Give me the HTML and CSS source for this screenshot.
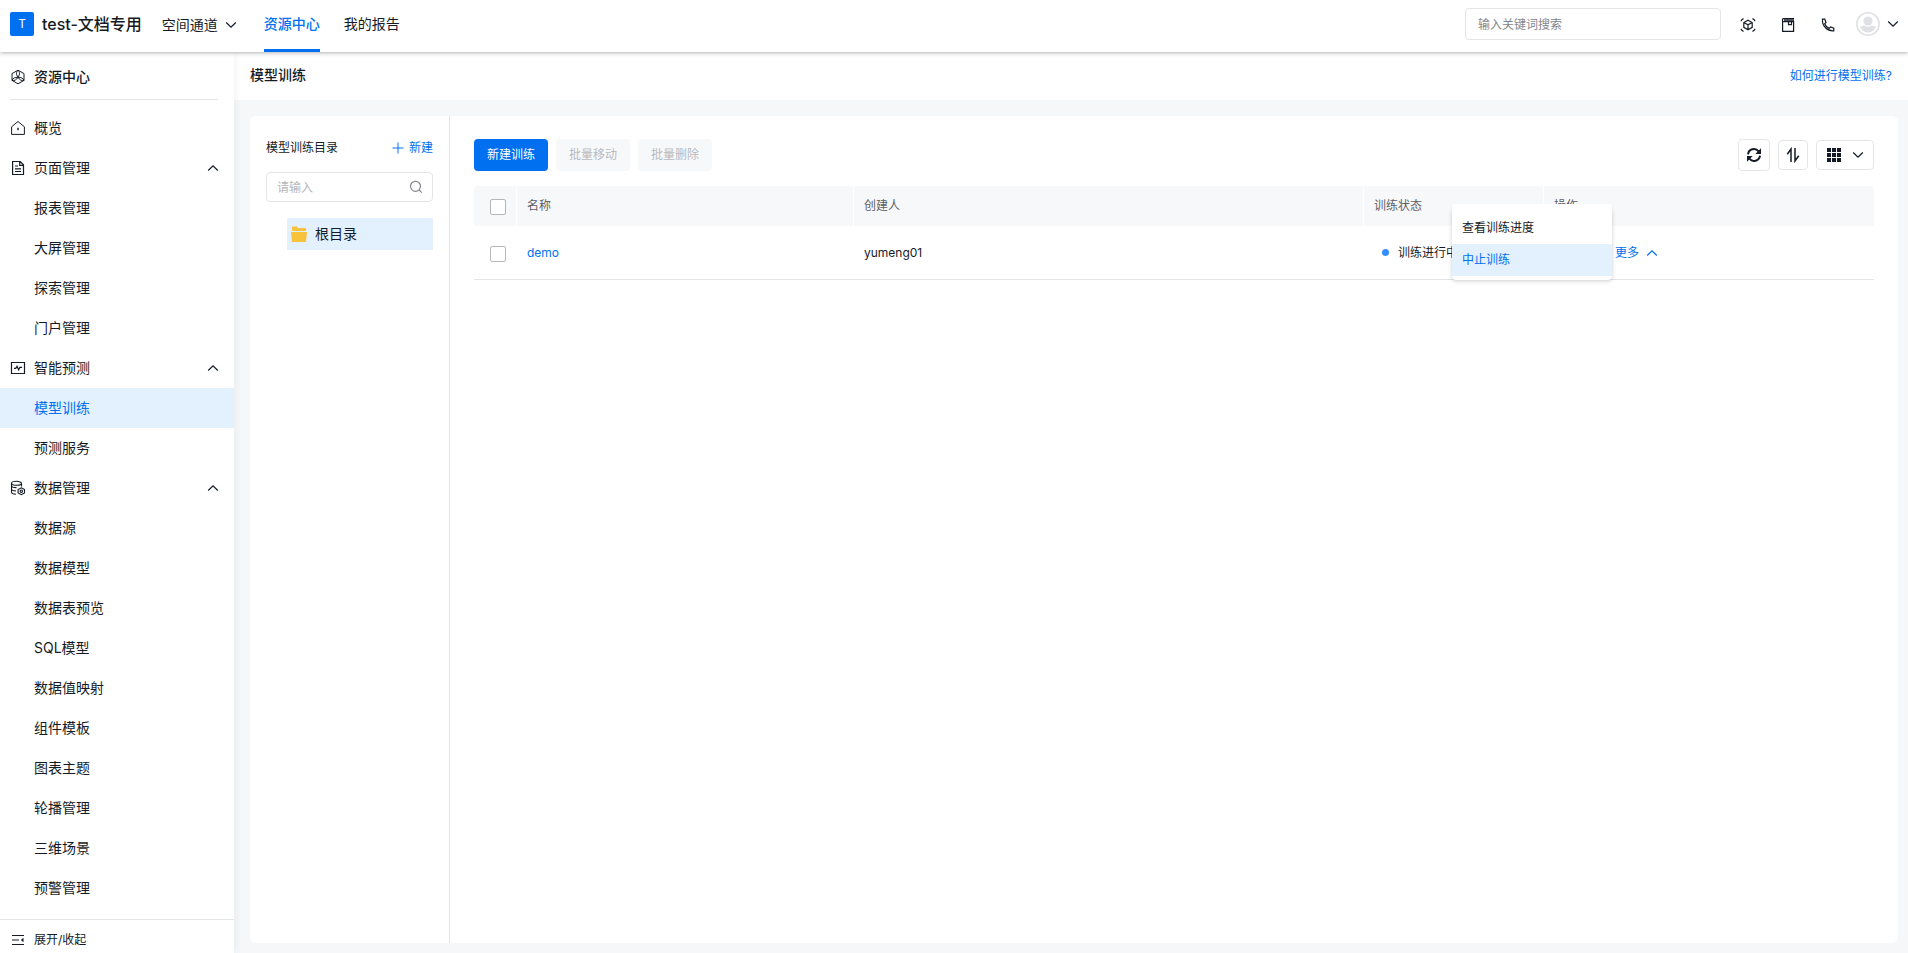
FILE: index.html
```html
<!DOCTYPE html>
<html lang="zh-CN">
<head>
<meta charset="utf-8">
<title>模型训练</title>
<link rel="stylesheet" href="styles.css">
</head>
<body>
<svg class="sprite" aria-hidden="true">
  <symbol id="down" viewBox="0 0 12 12"><path d="M1.2 3.5 6 8.200l4.800-4.700" fill="none" stroke="currentColor" stroke-width="1.200"/></symbol>
  <symbol id="up" viewBox="0 0 12 12"><path d="M1.200 8.500 6 3.800l4.800 4.700" fill="none" stroke="currentColor" stroke-width="1.200"/></symbol>
</svg>
<header class="topbar">
  <span class="logo">T</span>
  <strong class="org">test-文档专用</strong>
  <button class="space" type="button">空间通道<svg class="chev"><use href="#down"/></svg></button>
  <nav class="tabs">
    <a class="tab tab-active" href="#">资源中心</a>
    <a class="tab" href="#">我的报告</a>
  </nav>
  <input class="global-search" type="text" aria-label="搜索" placeholder="输入关键词搜索">
  <div class="tools">
    <button class="icon-btn" type="button" aria-label="三维"><svg class="ico" viewBox="0 0 16 16"><g fill="none" stroke="currentColor" stroke-width="1.200"><path d="M8 3.300 12.200 5.500v4.900L8 12.700 3.800 10.400V5.500zM3.800 5.500 8 7.800l4.200-2.300M8 7.800v4.900"/><path d="M1.300 4.200V3.200L3.500 1.500M14.700 4.200V3.200L12.500 1.500M1.300 11.800v1l2.200 1.700M14.700 11.800v1l-2.200 1.700"/></g></svg></button>
    <button class="icon-btn" type="button" aria-label="文档"><svg class="ico" viewBox="0 0 16 16"><g fill="none" stroke="currentColor" stroke-width="1.200"><path d="M14 1.600H3.800a1.500 1.500 0 0 0 0 3H13.600v9.800H2.600V3.500M4 3.100h10M8.500 4.600v3h3v-3"/></g></svg></button>
    <button class="icon-btn" type="button" aria-label="电话"><svg class="ico" viewBox="0 0 16 16"><path d="M2.500 2.200h2.300l1.200 3.300-1.400 1.300c.9 2.100 2.500 3.700 4.600 4.600l1.300-1.400 3.300 1.200v2.600c-6.400.6-11.900-4.900-11.300-11.600z" fill="none" stroke="currentColor" stroke-width="1.200"/></svg></button>
  </div>
  <button class="user" type="button" aria-label="用户">
    <svg class="avatar" viewBox="0 0 24 24"><circle cx="12" cy="12" r="11.200" fill="#fff" stroke="#dfe1e5" stroke-width="1.600"/><circle cx="12" cy="9" r="4.600" fill="#dfe1e5"/><path d="M4 14.300c2 0 3-.5 4.500-.8 2 1.600 5 1.600 7 0 1.500.3 2.500.8 4.500.8-1.200 3.900-4.200 6.200-8 6.200s-6.800-2.300-8-6.200z" fill="#dfe1e5"/></svg>
    <svg class="chev"><use href="#down"/></svg>
  </button>
</header>
<div class="shell">
  <aside class="sidebar">
    <div class="side-title">
      <svg class="ico" viewBox="0 0 16 16"><g fill="none" stroke="currentColor"><path d="M8 1.200 14 4.600v6.800L8 14.800 2 11.400V4.600z"/><path d="M8 1.200c-2 2-2 4 0 7 2-3 2-5 0-7zM8 8.200c-3 0-5 1-6 3.200 2.300.6 4.500-.4 6-3.200zM8 8.200c3 0 5 1 6 3.200-2.300.6-4.500-.4-6-3.200z"/></g></svg>
      资源中心
    </div>
    <nav class="menu">
      <a class="item" href="#"><svg class="ico" viewBox="0 0 16 16"><path d="M1.600 6.800 8 1.500l6.400 5.300v7.600H1.600z" fill="none" stroke="currentColor"/><path d="M7.300 7.700h1.400v2.600H7.300z" fill="currentColor"/></svg>概览</a>
      <button class="item" type="button"><svg class="ico" viewBox="0 0 16 16"><path d="M2.600 1.500h7.600l3.300 3.300v9.700H2.600zM9.700 1.500v3.800h3.800M5 6h3M5 8.800h6M5 11.500h6" fill="none" stroke="currentColor" stroke-width="1.200"/></svg>页面管理<svg class="chev fold"><use href="#up"/></svg></button>
      <a class="item sub" href="#">报表管理</a>
      <a class="item sub" href="#">大屏管理</a>
      <a class="item sub" href="#">探索管理</a>
      <a class="item sub" href="#">门户管理</a>
      <button class="item" type="button"><svg class="ico" viewBox="0 0 16 16"><path d="M1.500 2.500h13v11h-13zM4 8.300h1.800l1.200-2 1.700 3.500 1.200-2.500h2.200" fill="none" stroke="currentColor" stroke-width="1.200"/></svg>智能预测<svg class="chev fold"><use href="#up"/></svg></button>
      <a class="item sub active" href="#">模型训练</a>
      <a class="item sub" href="#">预测服务</a>
      <button class="item" type="button"><svg class="ico" viewBox="0 0 16 16"><g fill="none" stroke="currentColor" stroke-width="1.100"><ellipse cx="6.500" cy="3.300" rx="5" ry="2"/><path d="M1.500 3.300v2.200c0 1.200 2 2.100 5 2.100M1.500 6v3c0 1.100 1.700 1.800 4.500 2M1.500 9.500v2.700c0 1.100 1.600 1.900 4.500 2M11.500 3.300v3.200"/><path d="m11.300 7.800 3.200 1.700v3.400l-3.200 1.800-3.200-1.800V9.500z"/><circle cx="11.300" cy="11.200" r="1.200"/></g></svg>数据管理<svg class="chev fold"><use href="#up"/></svg></button>
      <a class="item sub" href="#">数据源</a>
      <a class="item sub" href="#">数据模型</a>
      <a class="item sub" href="#">数据表预览</a>
      <a class="item sub" href="#">SQL模型</a>
      <a class="item sub" href="#">数据值映射</a>
      <a class="item sub" href="#">组件模板</a>
      <a class="item sub" href="#">图表主题</a>
      <a class="item sub" href="#">轮播管理</a>
      <a class="item sub" href="#">三维场景</a>
      <a class="item sub" href="#">预警管理</a>
    </nav>
    <button class="collapse" type="button"><svg class="ico" viewBox="0 0 16 16"><path d="M2 3.500h12M2 8h7M2 12.500h12" fill="none" stroke="currentColor" stroke-width="1.200"/><path d="M13.500 5.700v4.600L10.800 8z" fill="currentColor"/></svg>展开/收起</button>
  </aside>
  <main class="main">
    <div class="page-head"><h1>模型训练</h1><a href="#">如何进行模型训练?</a></div>
    <div class="card">
      <section class="tree">
        <div class="tree-head"><span>模型训练目录</span><button class="link-btn" type="button"><svg class="plus" viewBox="0 0 12 12"><path d="M6 .5v11M.5 6h11" stroke="currentColor" fill="none"/></svg>新建</button></div>
        <div class="tree-search"><input type="text" aria-label="搜索目录" placeholder="请输入"><svg class="lens" viewBox="0 0 14 14"><path d="M6.500 1.300a5 5 0 1 0 0 10 5 5 0 0 0 0-10zM10.200 10l2.600 2.600" fill="none" stroke="currentColor" stroke-width="1.200"/></svg></div>
        <a class="node" href="#"><svg class="folder" viewBox="0 0 16 16"><path d="M1 .5h5l1 1.500h8v3H1zM0 6h16l-1 10H1z" fill="#f9c23c"/></svg>根目录</a>
      </section>
      <section class="list">
        <div class="actions">
          <button class="btn primary" type="button">新建训练</button>
          <button class="btn" type="button" disabled>批量移动</button>
          <button class="btn" type="button" disabled>批量删除</button>
          <div class="view">
            <button class="tool refresh" type="button" aria-label="刷新"><svg class="ico" viewBox="0 0 16 16"><path d="M2 7.300a6 6 0 0 1 10.600-3M14 8.700a6 6 0 0 1-10.600 3" fill="none" stroke="currentColor" stroke-width="2"/><path d="M15 1.300V7H9.300zM1 14.700V9h5.700z" fill="currentColor"/></svg></button>
            <button class="tool" type="button" aria-label="排序"><svg class="ico" viewBox="0 0 16 16"><path d="M6 15V2L2.300 7.200M10 1v13l3.700-5.200" fill="none" stroke="currentColor" stroke-width="1.500"/></svg></button>
            <button class="tool wide" type="button" aria-label="列"><svg class="ico" viewBox="0 0 16 16"><path d="M1 1h4v4H1zM6 1h4v4H6zM11 1h4v4h-4zM1 6h4v4H1zM6 6h4v4H6zM11 6h4v4h-4zM1 11h4v4H1zM6 11h4v4H6zM11 11h4v4h-4z" fill="currentColor"/></svg><svg class="chev"><use href="#down"/></svg></button>
          </div>
        </div>
        <table class="grid">
          <colgroup><col class="c-check"><col class="c-name"><col class="c-owner"><col class="c-state"><col class="c-op"></colgroup>
          <thead><tr><th class="pick"><input type="checkbox" aria-label="全选"></th><th>名称</th><th>创建人</th><th>训练状态</th><th>操作</th></tr></thead>
          <tbody><tr><td class="pick"><input type="checkbox" aria-label="选择 demo"></td><td><a href="#">demo</a></td><td>yumeng01</td><td><span class="state">训练进行中</span></td>
          <td><div class="more-wrap"><button class="link-btn more" type="button">更多<svg class="chev"><use href="#up"/></svg></button>
            <div class="popup"><button type="button">查看训练进度</button><button class="on" type="button">中止训练</button></div></div></td></tr></tbody>
        </table>
      </section>
    </div>
  </main>
</div>
</body>
</html>
```
FILE: styles.css
```css
* { box-sizing: border-box; }
body {
  margin: 0;
  height: 100vh;
  display: flex;
  flex-direction: column;
  overflow: hidden;
  font: 12px/20px Inter, "Noto Sans CJK SC", sans-serif;
  color: #151b26;
  background: #f6f7f9;
}
a { color: #0070f0; text-decoration: none; }
button { font: inherit; color: inherit; border: 0; background: none; padding: 0; }
button, a { cursor: pointer; }
input { font: inherit; color: inherit; }
input::placeholder { color: #84868c; }
.sprite { position: absolute; width: 0; height: 0; }
.chev { width: 12px; height: 12px; flex: none; }
.ico { width: 16px; height: 16px; flex: none; display: block; }

.topbar {
  height: 52px;
  flex: none;
  display: flex;
  align-items: center;
  padding: 0 9px 4px 10px;
  background: #fff;
  box-shadow: 0 1px 4px rgba(0, 0, 0, .3);
  position: relative;
  z-index: 2;
  font-size: 14px;
}
.logo {
  width: 24px;
  height: 24px;
  margin-right: 8px;
  border-radius: 2px;
  background: #0070f0;
  color: #fff;
  font-size: 12px;
  line-height: 24px;
  text-align: center;
}
.org { font-size: 16px; font-weight: 500; margin-right: 20px; }
.space { display: flex; align-items: center; gap: 7px; margin-right: 27px; padding-top: 2px; }
.tabs { display: flex; gap: 24px; height: 52px; margin-bottom: -4px; }
.tab { color: #151b26; line-height: 48px; border-bottom: 3px solid transparent; }
.tab-active { color: #0070f0; border-color: #0070f0; font-weight: 500; }
.global-search {
  width: 256px;
  height: 32px;
  margin: 0 19px 0 auto;
  padding: 1px 12px 0;
  border: 1px solid #e4e5e8;
  border-radius: 4px;
  font-size: 12px;
}
.tools { display: flex; gap: 24px; margin-right: 20px; padding-top: 2px; }
.user { display: flex; align-items: center; gap: 7px; }
.avatar { width: 24px; height: 24px; }

.shell { flex: 1; display: flex; min-height: 0; }
.sidebar {
  width: 234px;
  flex: none;
  display: flex;
  flex-direction: column;
  background: #fff;
  font-size: 14px;
  box-shadow: 1px 0 8px rgba(0, 0, 0, .06);
  position: relative;
}
.side-title {
  height: 48px;
  margin: 0 16px 8px 10px;
  padding-top: 2px;
  display: flex;
  align-items: center;
  gap: 8px;
  border-bottom: 1px solid #e4e5e8;
  font-weight: 500;
}
.menu { flex: 1; min-height: 0; overflow: hidden; }
.item {
  width: 100%;
  height: 40px;
  padding: 0 15px 0 10px;
  display: flex;
  align-items: center;
  gap: 8px;
  color: #151b26;
}
.item.sub { padding-left: 34px; }
.item.active { background: #e3f0fe; color: #0070f0; }
.fold { margin-left: auto; }
.collapse {
  height: 34px;
  padding: 6px 10px 0;
  display: flex;
  align-items: center;
  gap: 8px;
  border-top: 1px solid #e4e5e8;
  font-size: 12px;
}

.main { flex: 1; min-width: 0; display: flex; flex-direction: column; }
.page-head {
  height: 48px;
  flex: none;
  padding: 0 16px;
  display: flex;
  align-items: center;
  justify-content: space-between;
  background: #fff;
}
.page-head h1 { margin: 0; padding-bottom: 2px; font-size: 14px; line-height: 20px; font-weight: 500; }
.card {
  flex: 1;
  min-height: 0;
  margin: 16px 10px 10px 16px;
  display: flex;
  border-radius: 6px;
  background: #fff;
}
.tree { width: 200px; flex: none; padding: 22px 16px; border-right: 1px solid #e4e5e8; }
.tree-head { display: flex; justify-content: space-between; margin-bottom: 14px; }
.link-btn { display: flex; align-items: center; gap: 5px; color: #0070f0; }
.plus { width: 12px; height: 12px; }
.tree-search {
  height: 30px;
  margin-bottom: 16px;
  padding: 0 9px;
  display: flex;
  align-items: center;
  border: 1px solid #e4e5e8;
  border-radius: 4px;
}
.tree-search input { flex: 1; min-width: 0; padding: 1px 0 0 1px; border: 0; outline: 0; }
.tree-search input::placeholder { color: #b4b6ba; }
.lens { width: 14px; height: 14px; color: #84868c; }
.node {
  height: 32px;
  margin-left: 21px;
  padding-left: 4px;
  display: flex;
  align-items: center;
  gap: 8px;
  background: #e3f0fe;
  color: #151b26;
  font-size: 14px;
}
.folder { width: 16px; height: 16px; }

.list { flex: 1; min-width: 0; padding: 23px 24px; }
.actions { display: flex; gap: 8px; margin-bottom: 15px; }
.btn { width: 74px; height: 32px; border-radius: 4px; background: #f7f8fa; color: #b8babf; }
.btn.primary { background: #0070f0; color: #fff; }
.view { display: flex; align-items: center; gap: 8px; margin-left: auto; }
.tool {
  width: 30px;
  height: 30px;
  display: flex;
  align-items: center;
  justify-content: center;
  gap: 10px;
  border: 1px solid #e4e5e8;
  border-radius: 4px;
}
.refresh { width: 32px; height: 32px; }
.wide { width: 58px; }
.grid { width: 100%; table-layout: fixed; border-collapse: separate; border-spacing: 0; }
.c-check { width: 43px; }
.c-name { width: 337px; }
.c-owner { width: auto; }
.c-state { width: 180px; }
.c-op { width: 330px; }
.grid th {
  height: 40px;
  padding: 0 10px;
  border-right: 1px solid #fff;
  background: #f7f8fa;
  color: #5c5f66;
  font-weight: 400;
  text-align: left;
}
.grid th:first-child { border-radius: 4px 0 0; }
.grid th:last-child { border-right: 0; border-radius: 0 4px 0 0; }
.grid td { height: 54px; padding: 0 10px; border-bottom: 1px solid #e4e5e8; }
.grid .pick { padding: 2px 0 0 16px; }
.pick input {
  appearance: none;
  display: block;
  width: 16px;
  height: 16px;
  margin: 0;
  border: 1px solid #b4b6ba;
  border-radius: 2px;
  background: #fff;
}
.state { display: flex; align-items: center; gap: 9px; padding-left: 8px; }
.state::before { content: ""; width: 7px; height: 7px; border-radius: 50%; background: #338fff; }
.more-wrap { position: relative; padding-left: 61px; }
.more { gap: 7px; }
.popup {
  position: absolute;
  right: calc(100% - 58px);
  top: -35px;
  width: 160px;
  padding: 4px 0;
  border-radius: 4px;
  background: #fff;
  box-shadow: 0 1px 4px rgba(0, 0, 0, .2);
}
.popup::before {
  content: "";
  position: absolute;
  left: 0;
  right: 0;
  top: -4px;
  height: 8px;
  border-radius: 4px 4px 0 0;
  background: #fff;
}
.popup button { display: block; width: 100%; height: 32px; padding: 0 10px; text-align: left; }
.popup .on { background: #e3f0fe; color: #0070f0; }
```
